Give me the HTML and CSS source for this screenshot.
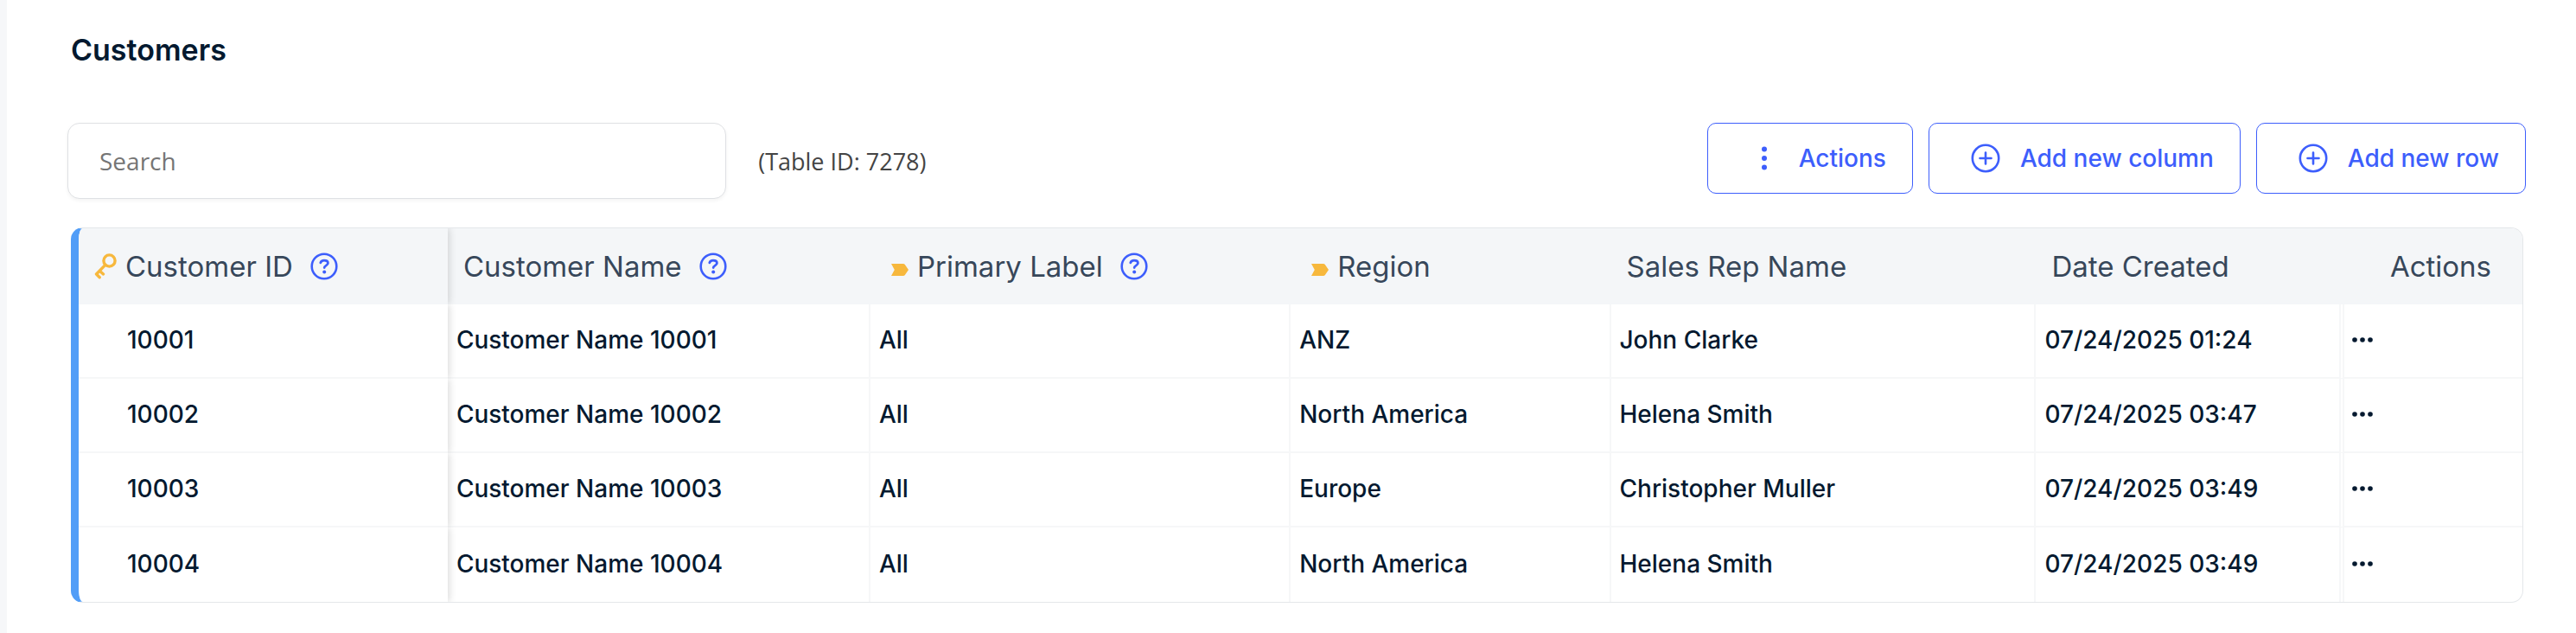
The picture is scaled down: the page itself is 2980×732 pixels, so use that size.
FILE: index.html
```html
<!DOCTYPE html>
<html lang="en">
<head>
  <meta charset="UTF-8" />
  <meta name="viewport" content="width=device-width, initial-scale=1.0" />
  <title>Customers</title>
  <link rel="stylesheet" href="styles.css">
</head>
<body>
  <!-- Shared icons -->
  <svg class="icon-defs" aria-hidden="true">
    <symbol id="icon-help" viewBox="0 0 32 32">
      <circle cx="16" cy="16" r="14.3" fill="none" stroke="currentColor" stroke-width="2.6" />
      <path d="M11.8 11.8c.5-1.700 2-2.600 4.200-2.600 2.700 0 4.400 1.200 4.400 3 0 2.800-4.200 2.900-4.200 5.300" fill="none" stroke="currentColor" stroke-width="2.8" stroke-linecap="round" stroke-linejoin="round" />
      <circle cx="16.2" cy="22.6" r="2" fill="currentColor" />
    </symbol>
    <symbol id="icon-plus" viewBox="0 0 34 34">
      <circle cx="17" cy="17" r="15.2" fill="none" stroke="currentColor" stroke-width="2.6" />
      <path d="M17 10.5v13M10.5 17h13" fill="none" stroke="currentColor" stroke-width="2.6" stroke-linecap="round" />
    </symbol>
    <symbol id="icon-flag" viewBox="0 0 20 14">
      <path d="M0 0h14q1 0 1.700.8L20 7l-4.300 6.200q-.7.8-1.700.8H0l3.800-7z" fill="currentColor" />
    </symbol>
    <symbol id="icon-more" viewBox="0 0 26 8">
      <circle cx="4" cy="4" r="2.8" fill="currentColor" />
      <circle cx="13" cy="4" r="2.8" fill="currentColor" />
      <circle cx="22" cy="4" r="2.8" fill="currentColor" />
    </symbol>
  </svg>

  <main class="page">
    <h1>Customers</h1>

    <div class="toolbar">
      <input type="search" class="search" placeholder="Search" aria-label="Search" />
      <span class="table-id">(Table ID: 7278)</span>
      <div class="toolbar-buttons">
        <button type="button" class="btn">
          <svg class="btn-icon" viewBox="0 0 34 34" aria-hidden="true">
            <circle cx="17" cy="6.5" r="3" fill="currentColor" />
            <circle cx="17" cy="17" r="3" fill="currentColor" />
            <circle cx="17" cy="27.5" r="3" fill="currentColor" />
          </svg>
          Actions
        </button>
        <button type="button" class="btn">
          <svg class="btn-icon" aria-hidden="true"><use href="#icon-plus" /></svg>
          Add new column
        </button>
        <button type="button" class="btn">
          <svg class="btn-icon" aria-hidden="true"><use href="#icon-plus" /></svg>
          Add new row
        </button>
      </div>
    </div>

    <div class="table-wrap">
      <table>
        <colgroup>
          <col class="col-id" />
          <col class="col-name" />
          <col class="col-label" />
          <col class="col-region" />
          <col class="col-rep" />
          <col class="col-date" />
          <col class="col-actions" />
        </colgroup>
        <thead>
          <tr>
            <th class="pinned">
              <div class="head">
                <svg class="key" viewBox="0 0 26 30" aria-hidden="true">
                  <circle cx="17.5" cy="8.5" r="6.6" fill="none" stroke="currentColor" stroke-width="3.4" />
                  <path d="M12.8 13.4L2.500 24M2.500 24l3.700 3.700M6.500 20.500l4 3.500" fill="none" stroke="currentColor" stroke-width="3.4" stroke-linecap="round" />
                </svg>
                Customer ID
                <button type="button" class="help" aria-label="About Customer ID"><svg aria-hidden="true"><use href="#icon-help" /></svg></button>
              </div>
            </th>
            <th>
              <div class="head">
                Customer Name
                <button type="button" class="help" aria-label="About Customer Name"><svg aria-hidden="true"><use href="#icon-help" /></svg></button>
              </div>
            </th>
            <th>
              <div class="head tagged">
                <svg class="flag" aria-hidden="true"><use href="#icon-flag" /></svg>
                Primary Label
                <button type="button" class="help" aria-label="About Primary Label"><svg aria-hidden="true"><use href="#icon-help" /></svg></button>
              </div>
            </th>
            <th>
              <div class="head tagged">
                <svg class="flag" aria-hidden="true"><use href="#icon-flag" /></svg>
                Region
              </div>
            </th>
            <th><div class="head">Sales Rep Name</div></th>
            <th><div class="head">Date Created</div></th>
            <th class="actions"><div class="head">Actions</div></th>
          </tr>
        </thead>
        <tbody>
          <tr>
            <td class="pinned">10001</td>
            <td>Customer Name 10001</td>
            <td>All</td>
            <td>ANZ</td>
            <td>John Clarke</td>
            <td class="date">07/24/2025 01:24</td>
            <td class="actions"><button type="button" class="more" aria-label="Row actions"><svg aria-hidden="true"><use href="#icon-more" /></svg></button></td>
          </tr>
          <tr>
            <td class="pinned">10002</td>
            <td>Customer Name 10002</td>
            <td>All</td>
            <td>North America</td>
            <td>Helena Smith</td>
            <td class="date">07/24/2025 03:47</td>
            <td class="actions"><button type="button" class="more" aria-label="Row actions"><svg aria-hidden="true"><use href="#icon-more" /></svg></button></td>
          </tr>
          <tr>
            <td class="pinned">10003</td>
            <td>Customer Name 10003</td>
            <td>All</td>
            <td>Europe</td>
            <td>Christopher Muller</td>
            <td class="date">07/24/2025 03:49</td>
            <td class="actions"><button type="button" class="more" aria-label="Row actions"><svg aria-hidden="true"><use href="#icon-more" /></svg></button></td>
          </tr>
          <tr>
            <td class="pinned">10004</td>
            <td>Customer Name 10004</td>
            <td>All</td>
            <td>North America</td>
            <td>Helena Smith</td>
            <td class="date">07/24/2025 03:49</td>
            <td class="actions"><button type="button" class="more" aria-label="Row actions"><svg aria-hidden="true"><use href="#icon-more" /></svg></button></td>
          </tr>
        </tbody>
      </table>
    </div>
  </main>
</body>
</html>
```
FILE: styles.css
```css
:root {
  --primary: #3d5efc;
  --accent: #519df7;
  --gold: #f7b83d;
  --text: #04192f;
  --heading: #37475a;
  --head-bg: #f4f6f8;
  --border: #e4e7ea;
  --line: #f6f7f8;
}

* {
  box-sizing: border-box;
}

body {
  margin: 0;
  min-height: 100vh;
  font-family: "Inter", "Liberation Sans", sans-serif;
  font-size: 28px;
  font-weight: 500;
  color: var(--text);
  background-color: #fff;
  border-left: 8px solid #f6f7f9;
}

.icon-defs {
  display: none;
}

.page {
  padding: 36px 58px 36px 70px;
}

h1 {
  margin: 0;
  padding-left: 4px;
  font-size: 34px;
  line-height: 44px;
  font-weight: 600;
}

.toolbar {
  display: flex;
  align-items: flex-start;
  margin-top: 62px;
}

.search {
  width: 26.8%;
  height: 88px;
  padding: 0 36px;
  border: 1px solid #dfe1e4;
  border-radius: 14px;
  background-color: #fff;
  box-shadow: 0 2px 4px rgba(0, 0, 0, 0.05);
  font-family: "Open Sans", sans-serif;
  font-size: 28px;
  appearance: none;
}

.search::placeholder {
  color: #757575;
}

.table-id {
  margin-left: 37px;
  line-height: 90px;
  font-family: "Open Sans", sans-serif;
  font-size: 27px;
  font-weight: 400;
  color: #444;
}

.toolbar-buttons {
  display: flex;
  gap: 18px;
  margin-left: auto;
}

.btn {
  display: flex;
  align-items: center;
  gap: 23px;
  height: 82px;
  padding: 0 30px 0 48px;
  border: 1px solid var(--primary);
  border-radius: 10px;
  background-color: #fff;
  color: var(--primary);
  font: inherit;
  cursor: pointer;
}

.btn-icon {
  width: 34px;
  height: 34px;
}

.table-wrap {
  margin: 31px 3px 0 4px;
  border: 1px solid var(--border);
  border-left: 9px solid var(--accent);
  border-radius: 14px;
  overflow: hidden;
}

table {
  width: 100%;
  table-layout: fixed;
  border-collapse: separate;
  border-spacing: 0;
}

.col-id { width: 15.1%; }
.col-name { width: 17.3%; }
.col-label { width: 17.2%; }
.col-region { width: 13.1%; }
.col-rep { width: 17.4%; }
.col-date { width: 12.6%; }

th {
  height: 88px;
  padding: 0 18px;
  background-color: var(--head-bg);
  color: var(--heading);
  font-size: 33px;
  font-weight: 400;
  text-align: left;
}

.head {
  display: flex;
  align-items: center;
}

.tagged {
  padding-left: 6px;
}

.key {
  width: 26px;
  height: 30px;
  margin-right: 10px;
  color: var(--gold);
}

.flag {
  width: 20px;
  height: 14px;
  margin: 8px 10px 0 0;
  color: var(--gold);
}

.help {
  width: 32px;
  height: 32px;
  margin-left: 20px;
  padding: 0;
  border: none;
  background: none;
  color: var(--primary);
  cursor: pointer;
}

.help svg {
  display: block;
  width: 32px;
  height: 32px;
}

td {
  height: 86px;
  padding: 0 10px 2px;
  border-right: 2px solid var(--line);
  border-bottom: 2px solid var(--line);
}

/* shadow falls only to the right of the pinned column */
.pinned {
  position: relative;
  border-right: none;
  box-shadow: 2px 0 8px rgba(0, 0, 0, 0.14);
  clip-path: inset(0 -16px 0 0);
}

td.pinned {
  padding-left: 56px;
}

td.date {
  border-right: 6px double var(--line);
}

td.actions {
  padding-left: 8px;
  border-right: none;
}

th.actions .head {
  justify-content: flex-end;
  padding-right: 18px;
}

tbody tr:last-child td {
  border-bottom: none;
}

.more {
  display: block;
  padding: 0;
  border: none;
  background: none;
  color: var(--text);
  cursor: pointer;
}

.more svg {
  display: block;
  width: 26px;
  height: 8px;
}
```
